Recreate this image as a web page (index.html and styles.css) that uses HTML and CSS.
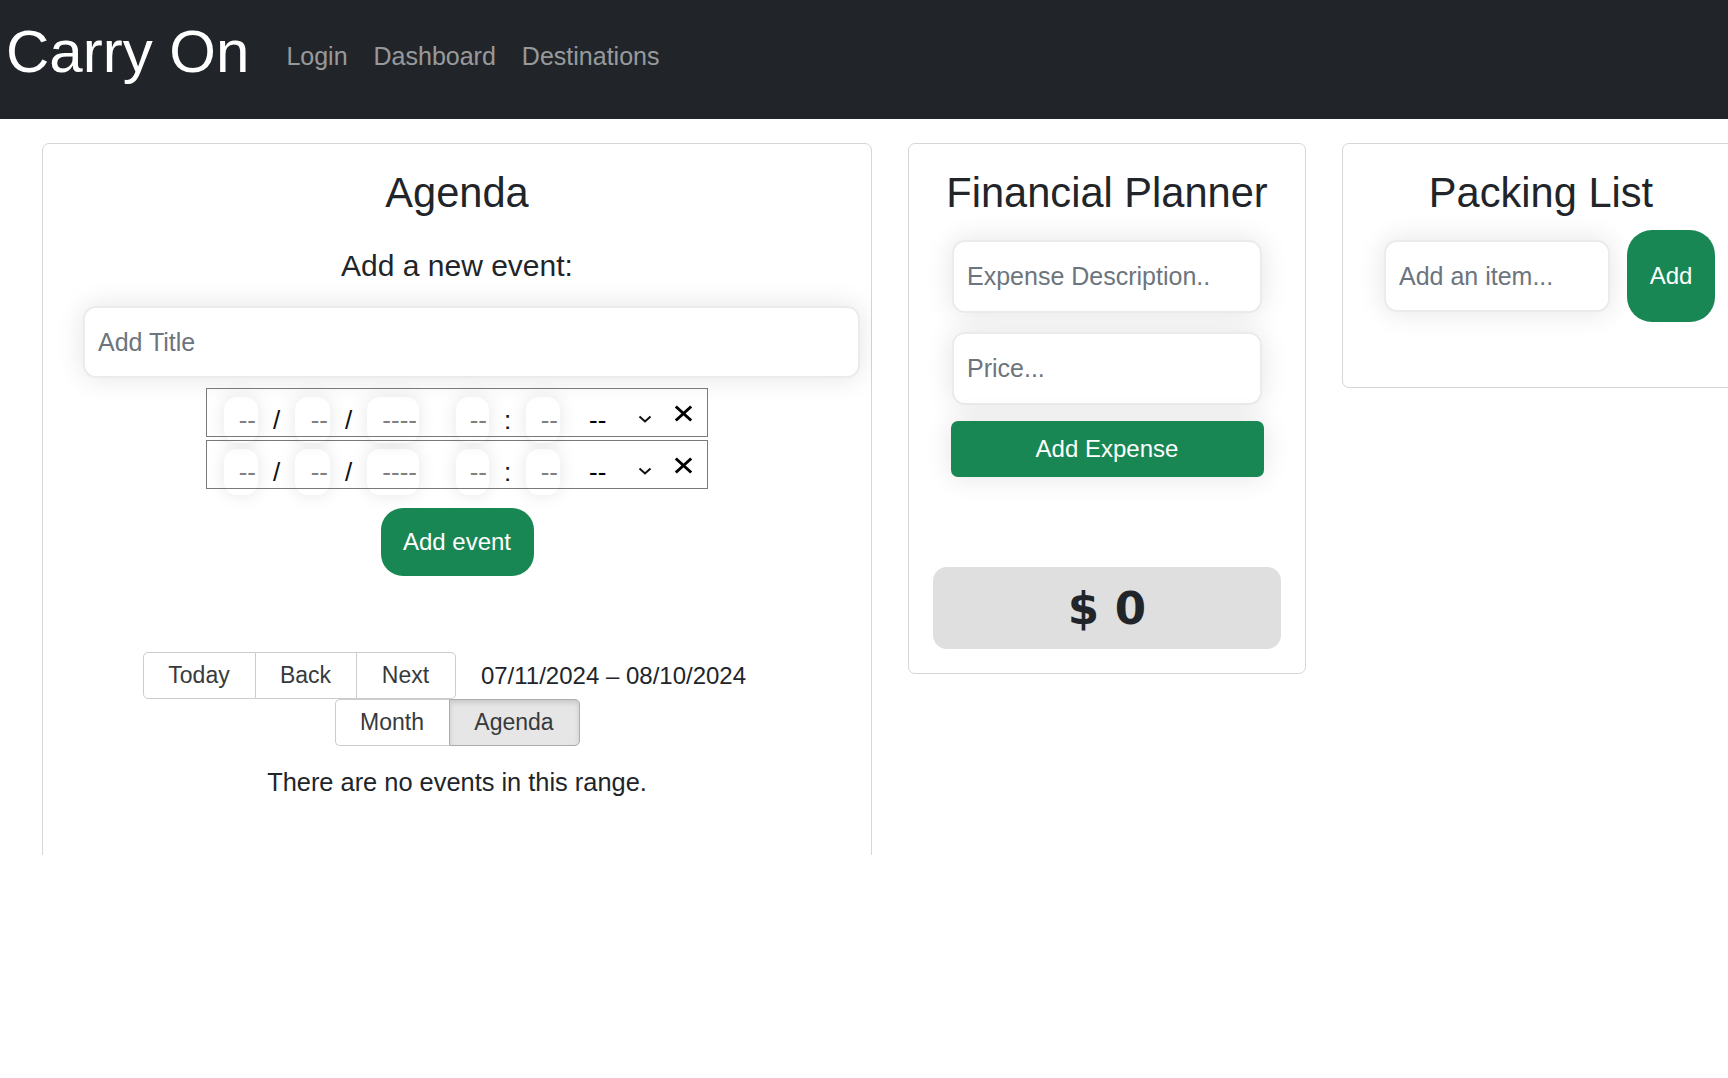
FILE: index.html
```html
<!DOCTYPE html>
<html lang="en">
<head>
<meta charset="utf-8">
<title>Carry On</title>
<link rel="stylesheet" href="styles.css">
</head>
<body>
<nav class="navbar">
  <a class="brand" href="#">Carry On</a>
  <div class="nav-links">
    <a class="nav-link" href="#">Login</a>
    <a class="nav-link" href="#">Dashboard</a>
    <a class="nav-link" href="#">Destinations</a>
  </div>
</nav>
<main class="board">
  <div class="agenda-clip">
    <section class="card agenda-card">
      <h2 class="card-title">Agenda</h2>
      <p class="subhead">Add a new event:</p>
      <input class="field title-field" type="text" placeholder="Add Title">
      <div class="dt-picker">
        <span class="seg w-day first">--</span><span class="sep">/</span><span class="seg w-month">--</span><span class="sep">/</span><span class="seg w-year">----</span>
        <span class="seg w-hour">--</span><span class="sep">:</span><span class="seg w-min">--</span>
        <span class="ampm">--</span>
        <svg class="chev" width="14" height="8" viewBox="0 0 14 8"><polyline points="1.5,1.5 7,6.5 12.5,1.5" fill="none" stroke="#111" stroke-width="2"/></svg>
        <svg class="clear" width="19" height="17" viewBox="0 0 19 17"><line x1="1.8" y1="1.5" x2="17.2" y2="15.5" stroke="#000" stroke-width="3"/><line x1="17.2" y1="1.5" x2="1.8" y2="15.5" stroke="#000" stroke-width="3"/></svg>
      </div>
      <div class="dt-picker">
        <span class="seg w-day first">--</span><span class="sep">/</span><span class="seg w-month">--</span><span class="sep">/</span><span class="seg w-year">----</span>
        <span class="seg w-hour">--</span><span class="sep">:</span><span class="seg w-min">--</span>
        <span class="ampm">--</span>
        <svg class="chev" width="14" height="8" viewBox="0 0 14 8"><polyline points="1.5,1.5 7,6.5 12.5,1.5" fill="none" stroke="#111" stroke-width="2"/></svg>
        <svg class="clear" width="19" height="17" viewBox="0 0 19 17"><line x1="1.8" y1="1.5" x2="17.2" y2="15.5" stroke="#000" stroke-width="3"/><line x1="17.2" y1="1.5" x2="1.8" y2="15.5" stroke="#000" stroke-width="3"/></svg>
      </div>
      <button class="btn-green add-event" type="button">Add event</button>
      <div class="calendar">
        <div class="rbc-toolbar">
          <span class="btn-group">
            <button class="rbc-btn b-today" type="button">Today</button><button class="rbc-btn b-back" type="button">Back</button><button class="rbc-btn b-next" type="button">Next</button>
          </span>
          <span class="rbc-label">07/11/2024 – 08/10/2024</span>
          <span class="btn-group">
            <button class="rbc-btn b-month" type="button">Month</button><button class="rbc-btn b-agenda active" type="button">Agenda</button>
          </span>
        </div>
        <p class="empty">There are no events in this range.</p>
      </div>
    </section>
  </div>

  <section class="card finance-card">
    <h2 class="card-title">Financial Planner</h2>
    <input class="field finance-field exp-desc" type="text" placeholder="Expense Description..">
    <input class="field finance-field price" type="text" placeholder="Price...">
    <button class="btn-green add-expense" type="button">Add Expense</button>
    <div class="total">$ 0</div>
  </section>

  <section class="card packing-card">
    <h2 class="card-title">Packing List</h2>
    <div class="pack-row">
      <input class="field pack-field" type="text" placeholder="Add an item...">
      <button class="btn-green pack-add" type="button">Add</button>
    </div>
  </section>
</main>
</body>
</html>
```

FILE: styles.css
```css
* {
  box-sizing: border-box;
}

html,
body {
  margin: 0;
  padding: 0;
  overflow: hidden;
}

body {
  width: 1728px;
  height: 1078px;
  background: #fff;
  color: #212529;
  font-family: "Liberation Sans", Arial, sans-serif;
}

/* ---------- navbar ---------- */
.navbar {
  display: flex;
  align-items: flex-start;
  height: 119px;
  padding-left: 6px;
  background: #212529;
}

.brand {
  margin: 18px 24px 0 0;
  font-size: 60px;
  line-height: 67px;
  color: #fff;
  text-decoration: none;
}

.nav-links {
  display: flex;
  margin-top: 42px;
}

.nav-link {
  padding: 0 13px;
  font-size: 25px;
  line-height: 28px;
  color: rgba(255, 255, 255, 0.55);
  text-decoration: none;
}

/* ---------- board ---------- */
.board {
  display: flex;
  align-items: flex-start;
  gap: 36px;
  width: max-content;
  padding: 24px 0 0 42px;
}

.card {
  flex-shrink: 0;
  background: #fff;
  border: 1px solid #d6d6d6;
  border-radius: 7px;
}

.card-title {
  margin: 0;
  font-size: 41.6px;
  line-height: 50px;
  font-weight: 400;
  text-align: center;
}

.field {
  display: block;
  padding: 0 13px;
  border: 2px solid #ebebeb;
  border-radius: 13px;
  background: #fff;
  box-shadow: 0 0 28px rgba(0, 0, 0, 0.11);
  font: 25px "Liberation Sans", Arial, sans-serif;
  color: #212529;
  outline: none;
}

.field::placeholder {
  color: #6c757d;
}

.btn-green {
  border: none;
  background: #198754;
  color: #fff;
  font: 24px "Liberation Sans", Arial, sans-serif;
  cursor: pointer;
}

/* ---------- agenda ---------- */
.agenda-clip {
  flex-shrink: 0;
  width: 830px;
  height: 712px;
  overflow: hidden;
}

.agenda-card {
  width: 830px;
  height: 760px;
  padding-top: 24px;
}

.subhead {
  margin: 30px 0 0;
  font-size: 30px;
  line-height: 36px;
  text-align: center;
}

.title-field {
  width: 777px;
  height: 72px;
  margin: 22px 0 0 40px;
}

.dt-picker {
  display: flex;
  align-items: baseline;
  width: 502px;
  height: 49px;
  margin: 10px auto 0;
  border: 1px solid #7a7a7a;
}

.dt-picker + .dt-picker {
  margin-top: 3px;
}

.seg {
  flex-shrink: 0;
  height: 46px;
  margin-top: 8px;
  padding-right: 2px;
  border-radius: 13px;
  box-shadow: 0 0 18px rgba(0, 0, 0, 0.1);
  font-size: 26px;
  line-height: 46px;
  color: #808080;
  text-align: right;
}

.seg.first {
  margin-left: 17px;
}

.w-day { width: 34px; }
.w-month { width: 35px; }
.w-year { width: 52px; }
.w-hour { width: 33px; margin-left: 37px; }
.w-min { width: 34px; }

.sep {
  flex-shrink: 0;
  width: 37px;
  font-size: 26px;
  text-align: center;
  color: #111;
}

.ampm {
  margin-left: 29px;
  font-size: 26px;
  color: #000;
}

.chev {
  align-self: flex-start;
  margin: 25.7px 0 0 32px;
}

.clear {
  align-self: flex-start;
  margin: 15.7px 0 0 22px;
}

.add-event {
  display: block;
  width: 153px;
  height: 68px;
  margin: 19px auto 0;
  border-radius: 22px;
}

/* calendar */
.calendar {
  width: 629px;
  margin: 76px auto 0;
}

.rbc-toolbar {
  display: flex;
  flex-wrap: wrap;
  justify-content: center;
  align-items: center;
}

.btn-group {
  display: inline-flex;
}

.rbc-btn {
  height: 47px;
  padding: 0;
  border: 1px solid #cccccc;
  background: #fff;
  color: #373a3c;
  font: 23px "Liberation Sans", Arial, sans-serif;
}

.b-today { width: 113px; border-radius: 5px 0 0 5px; }
.b-back { width: 101px; border-left: none; }
.b-next { width: 99px; border-left: none; border-radius: 0 5px 5px 0; }
.b-month { width: 114px; border-right: none; border-radius: 5px 0 0 5px; }
.b-agenda { width: 131px; border-radius: 0 5px 5px 0; }

.rbc-btn.active {
  background: #e6e6e6;
  border-color: #adadad;
  box-shadow: inset 0 3px 5px rgba(0, 0, 0, 0.125);
}

.rbc-label {
  flex-grow: 1;
  padding: 0 10px;
  font-size: 24px;
  text-align: center;
}

.empty {
  margin: 21px 0 0;
  font-size: 25.4px;
  line-height: 30px;
  text-align: center;
}

/* ---------- finance ---------- */
.finance-card {
  width: 398px;
  height: 531px;
  padding-top: 24px;
}

.finance-field {
  width: 310px;
  height: 73px;
  margin-left: auto;
  margin-right: auto;
}

.exp-desc { margin-top: 22px; }
.price { margin-top: 19px; }

.add-expense {
  display: block;
  width: 313px;
  height: 56px;
  margin: 16px auto 0;
  border-radius: 7px;
  box-shadow: 0 0 28px rgba(0, 0, 0, 0.11);
}

.total {
  display: flex;
  align-items: center;
  justify-content: center;
  width: 348px;
  height: 82px;
  margin: 90px auto 0;
  border-radius: 14px;
  background: #dfdfdf;
  font-family: "DejaVu Sans", "Liberation Sans", sans-serif;
  font-size: 45px;
  font-weight: 700;
  color: #212529;
}

/* ---------- packing ---------- */
.packing-card {
  width: 398px;
  height: 245px;
  padding-top: 24px;
}

.pack-row {
  display: flex;
  align-items: center;
  gap: 17px;
  margin: 12px 0 0 41px;
}

.pack-field {
  flex-shrink: 0;
  width: 226px;
  height: 72px;
}

.pack-add {
  flex-shrink: 0;
  width: 88px;
  height: 92px;
  border-radius: 25px;
}
```
